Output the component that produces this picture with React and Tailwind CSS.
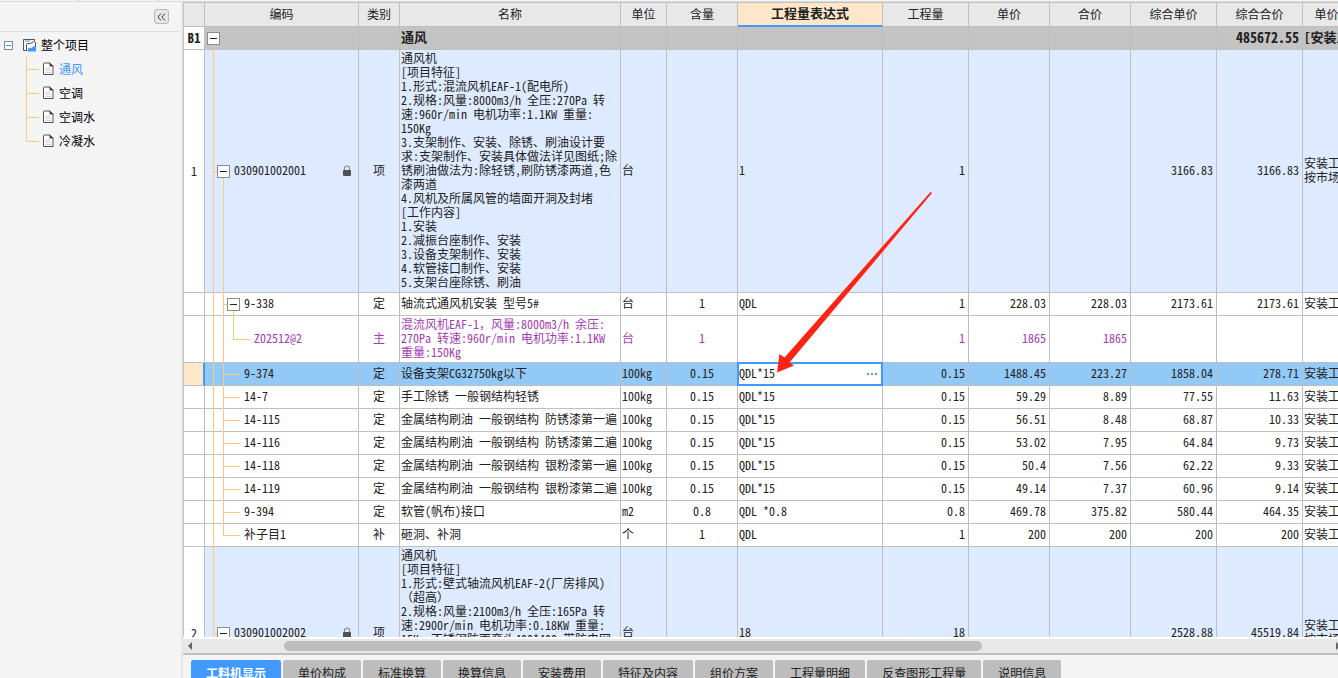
import React from 'react'
import clsx from 'clsx'

const COLUMNS = [
  { key: 'no',       label: '',           width: 21 },
  { key: 'code',     label: '编码',       width: 154 },
  { key: 'kind',     label: '类别',       width: 41 },
  { key: 'name',     label: '名称',       width: 221 },
  { key: 'unit',     label: '单位',       width: 46 },
  { key: 'content',  label: '含量',       width: 71 },
  { key: 'expr',     label: '工程量表达式', width: 145, active: true },
  { key: 'qty',      label: '工程量',     width: 86 },
  { key: 'price',    label: '单价',       width: 81 },
  { key: 'total',    label: '合价',       width: 81 },
  { key: 'unitCost', label: '综合单价',   width: 86 },
  { key: 'sumCost',  label: '综合合价',   width: 86 },
  { key: 'file',     label: '单价构成文件', width: 96 },
]

const TABLE_WIDTH = COLUMNS.reduce((sum, c) => sum + c.width, 0)

const NAME_1 = `通风机
[项目特征]
1.形式:混流风机EAF-1(配电所)
2.规格:风量:8000m3/h 全压:270Pa 转
速:960r/min 电机功率:1.1KW 重量:
150Kg
3.支架制作、安装、除锈、刷油设计要
求:支架制作、安装具体做法详见图纸;除
锈刷油做法为:除轻锈,刷防锈漆两道,色
漆两道
4.风机及所属风管的墙面开洞及封堵
[工作内容]
1.安装
2.减振台座制作、安装
3.设备支架制作、安装
4.软管接口制作、安装
5.支架台座除锈、刷油`

const NAME_2 = `通风机
[项目特征]
1.形式:壁式轴流风机EAF-2(厂房排风)
（超高）
2.规格:风量:2100m3/h 全压:165Pa 转
速:2900r/min 电机功率:0.18KW 重量:
15Kg 不锈钢防雨弯头400*400 带防虫网`

const NAME_MAIN = `混流风机EAF-1，风量:8000m3/h 余压:
270Pa 转速:960r/min 电机功率:1.1KW
重量:150Kg`

// guides: one entry per tree level, "full" | "top" | "bottom"
const ROWS = [
  { type: 'group', no: 'B1', level: 0, toggle: true, guides: ['bottom'], name: '通风', sumCost: '485672.55', file: '[安装工程]' },
  { type: 'item', no: '1', level: 1, toggle: true, lock: true, guides: ['full', 'bottom'], height: 'h-[243px]', code: '030901002001', kind: '项', name: NAME_1, unit: '台', expr: '1', qty: '1', unitCost: '3166.83', sumCost: '3166.83', file: '安装工程\n按市场价' },
  { type: 'sub', level: 2, toggle: true, guides: ['full', 'full', 'bottom'], code: '9-338', kind: '定', name: '轴流式通风机安装 型号5#', unit: '台', content: '1', expr: 'QDL', qty: '1', price: '228.03', total: '228.03', unitCost: '2173.61', sumCost: '2173.61', file: '安装工程' },
  { type: 'main', level: 3, guides: ['full', 'full', 'top'], height: 'h-[47px]', code: 'Z02512@2', kind: '主', name: NAME_MAIN, unit: '台', content: '1', qty: '1', price: '1865', total: '1865' },
  { type: 'selected', level: 2, guides: ['full', 'full'], code: '9-374', kind: '定', name: '设备支架CG32750kg以下', unit: '100kg', content: '0.15', expr: 'QDL*15', qty: '0.15', price: '1488.45', total: '223.27', unitCost: '1858.04', sumCost: '278.71', file: '安装工程' },
  { type: 'sub', level: 2, guides: ['full', 'full'], code: '14-7', kind: '定', name: '手工除锈 一般钢结构轻锈', unit: '100kg', content: '0.15', expr: 'QDL*15', qty: '0.15', price: '59.29', total: '8.89', unitCost: '77.55', sumCost: '11.63', file: '安装工程' },
  { type: 'sub', level: 2, guides: ['full', 'full'], code: '14-115', kind: '定', name: '金属结构刷油 一般钢结构 防锈漆第一遍', unit: '100kg', content: '0.15', expr: 'QDL*15', qty: '0.15', price: '56.51', total: '8.48', unitCost: '68.87', sumCost: '10.33', file: '安装工程' },
  { type: 'sub', level: 2, guides: ['full', 'full'], code: '14-116', kind: '定', name: '金属结构刷油 一般钢结构 防锈漆第二遍', unit: '100kg', content: '0.15', expr: 'QDL*15', qty: '0.15', price: '53.02', total: '7.95', unitCost: '64.84', sumCost: '9.73', file: '安装工程' },
  { type: 'sub', level: 2, guides: ['full', 'full'], code: '14-118', kind: '定', name: '金属结构刷油 一般钢结构 银粉漆第一遍', unit: '100kg', content: '0.15', expr: 'QDL*15', qty: '0.15', price: '50.4', total: '7.56', unitCost: '62.22', sumCost: '9.33', file: '安装工程' },
  { type: 'sub', level: 2, guides: ['full', 'full'], code: '14-119', kind: '定', name: '金属结构刷油 一般钢结构 银粉漆第二遍', unit: '100kg', content: '0.15', expr: 'QDL*15', qty: '0.15', price: '49.14', total: '7.37', unitCost: '60.96', sumCost: '9.14', file: '安装工程' },
  { type: 'sub', level: 2, guides: ['full', 'full'], code: '9-394', kind: '定', name: '软管(帆布)接口', unit: 'm2', content: '0.8', expr: 'QDL *0.8', qty: '0.8', price: '469.78', total: '375.82', unitCost: '580.44', sumCost: '464.35', file: '安装工程' },
  { type: 'sub', level: 2, guides: ['full', 'top'], code: '补子目1', kind: '补', name: '砸洞、补洞', unit: '个', content: '1', expr: 'QDL', qty: '1', price: '200', total: '200', unitCost: '200', sumCost: '200', file: '安装工程' },
  { type: 'item', no: '2', level: 1, toggle: true, lock: true, guides: ['full', 'bottom'], height: 'h-[173px]', code: '030901002002', kind: '项', name: NAME_2, unit: '台', expr: '18', qty: '18', unitCost: '2528.88', sumCost: '45519.84', file: '安装工程\n按市场价' },
]

const ROW_STYLE = {
  group: 'bg-[#c4c4c4] font-bold text-[13px]',
  item: 'bg-[#deeaff]',
  sub: 'bg-white',
  main: 'bg-white text-[#a33cb4]',
  selected: 'bg-[#92c9f7]',
}

const ALIGN = {
  kind: 'text-center',
  name: 'pl-px',
  unit: 'pl-px',
  content: 'text-center',
  expr: 'pl-px',
  qty: 'text-right pr-[3px]',
  price: 'text-right pr-[3px]',
  total: 'text-right pr-[3px]',
  unitCost: 'text-right pr-[3px]',
  sumCost: 'text-right pr-[3px]',
  file: 'pl-px',
}

const GUIDE = {
  full: '-top-px -bottom-px',
  top: '-top-px bottom-1/2',
  bottom: 'top-1/2 -bottom-px',
}

const TREE = ['通风', '空调', '空调水', '冷凝水']
const TABS = ['工料机显示', '单价构成', '标准换算', '换算信息', '安装费用', '特征及内容', '组价方案', '工程量明细', '反查图形工程量', '说明信息']

function LockIcon() {
  return (
    <svg width="10" height="12" viewBox="0 0 10 12" aria-hidden="true">
      <path d="M2.5 6V3.5a2.5 2.5 0 0 1 5 0V6" fill="none" stroke="#8a8a8a" strokeWidth="1.2" />
      <rect x="1" y="5" width="8" height="6" rx="1" fill="#505050" />
    </svg>
  )
}

function PageIcon() {
  return (
    <svg width="11" height="14" viewBox="0 0 11 14" aria-hidden="true">
      <path d="M1.5 1H7l3 3v8.5H.5V2a1 1 0 0 1 1-1z" fill="#fff" stroke="#555" />
      <path d="M6.5 .5L10.5 4.5H6.5z" fill="#444" />
      <path d="M2.5 6.5h5M2.5 8.5h6M2.5 10.5h6" stroke="#d4d4d4" />
    </svg>
  )
}

function ProjectIcon() {
  return (
    <svg width="14" height="14" viewBox="0 0 14 14" aria-hidden="true">
      <path d="M12 1.500H.5v11h4M3.500 12V6.500q0-1 1-1h3L11.500 3M11.500 1.500v2M12.500 4v5" fill="none" stroke="#555" />
      <rect x="2" y="2" width="5" height="2" fill="#9fd0fb" />
      <path d="M5 13.500v-3l2-1 1 1 3-2.500 2 1.500v4z" fill="#4199ff" />
    </svg>
  )
}

function Sidebar() {
  return (
    <aside className="w-[181px] shrink-0 text-xs text-black">
      <div className="mr-[2px] flex h-[30px] items-center justify-end border-b border-[#dcdcdc] pr-[10px]">
        <button
          type="button"
          aria-label="收起"
          className="flex h-[15px] w-[15px] items-center justify-center rounded-[3px] border border-[#b8b8b8] bg-[#e6e6e6]"
        >
          <svg width="9" height="8" viewBox="0 0 9 8" fill="none" stroke="#444" aria-hidden="true">
            <path d="M4 .5L1 4l3 3.500M8 .5L5 4l3 3.500" />
          </svg>
        </button>
      </div>
      <div className="flex h-6 items-center pl-1 mt-[1px]">
        <button type="button" aria-label="折叠" className="flex h-[9px] w-[9px] items-center justify-center border border-[#8a8a8a] bg-white">
          <span className="h-px w-[5px] bg-[#22a7d8]" />
        </button>
        <span className="ml-[10px] mr-1"><ProjectIcon /></span>
        整个项目
      </div>
      <ul className="ml-[26px]">
        {TREE.map((item, i) => (
          <li key={item} className="relative flex h-6 items-center">
            <span className={clsx('absolute left-0 top-0 w-px bg-[#fdc97c]', i === TREE.length - 1 ? 'h-3' : 'h-6')} />
            <span className="h-px w-[13px] bg-[#fdc97c]" />
            <span className="ml-1 mr-[5px]"><PageIcon /></span>
            <a href="#" className={i === 0 ? 'text-[#4199ff]' : 'text-black'}>{item}</a>
          </li>
        ))}
      </ul>
    </aside>
  )
}

const INDENT = ['pl-[2px]', 'pl-[12px]', 'pl-[22px]', 'pl-[32px]']
const GUIDE_X = ['left-[8px]', 'left-[18px]', 'left-[28px]']

// The grid uses half-width Latin glyphs, full-width punctuation has to opt out
function CellText({ children }) {
  if (!children) return null
  return children.split(/([，（）])/).map((part, i) => (
    i % 2 ? <span key={i} className="[font-feature-settings:normal]">{part}</span> : part
  ))
}

function CodeCell({ row }) {
  return (
    <td className="relative border-b border-r border-[#bfbfbf] p-0">
      {row.guides.map((guide, i) => (
        <span key={i} className={clsx('absolute w-px bg-[#fdc97c]', GUIDE_X[i], GUIDE[guide])} />
      ))}
      {row.level > 0 && (
        <span
          className={clsx(
            'absolute top-1/2 h-px bg-[#fdc97c]',
            GUIDE_X[row.level - 1],
            row.toggle ? 'w-[4px]' : 'w-[17px]',
          )}
        />
      )}
      <div className={clsx('relative flex items-center', INDENT[row.level])}>
        {row.toggle ? (
          <button type="button" aria-label="折叠" className="flex h-[13px] w-[13px] shrink-0 items-center justify-center border border-[#8c8c8c] bg-white">
            <span className="h-px w-[7px] bg-[#222]" />
          </button>
        ) : (
          <span className="w-[13px] shrink-0" />
        )}
        <span className="ml-[4px] flex-1 pb-[2px]">{row.code}</span>
        {row.lock && <span className="mr-[6px]"><LockIcon /></span>}
      </div>
    </td>
  )
}

function ExpressionEditor({ value }) {
  return (
    <div className="absolute -inset-px z-10 flex items-center border-2 border-[#4199ff] bg-white pr-[3px]">
      <input aria-label="工程量表达式" defaultValue={value} className="min-w-0 flex-1 bg-transparent pb-[2px] outline-none" />
      <button type="button" aria-label="更多" className="flex gap-[2px] p-px">
        <span className="h-[2px] w-[2px] bg-[#5b9bd5]" />
        <span className="h-[2px] w-[2px] bg-[#5b9bd5]" />
        <span className="h-[2px] w-[2px] bg-[#5b9bd5]" />
      </button>
    </div>
  )
}

function GridRow({ row }) {
  const selected = row.type === 'selected'
  return (
    <tr className={clsx(row.height ?? 'h-[23px]', ROW_STYLE[row.type])}>
      <td
        className={clsx(
          'border-b border-b-[#bfbfbf] p-0 pb-px text-center text-[#222]',
          selected ? 'border-r-2 border-r-[#4199ff] bg-[#fee6c8]' : 'border-r border-r-[#bfbfbf] bg-white',
        )}
      >
        {row.no}
      </td>
      <CodeCell row={row} />
      {COLUMNS.slice(2).map(col => (
        <td
          key={col.key}
          className={clsx(
            'relative whitespace-pre border-b border-r border-[#bfbfbf]',
            col.key === 'name' && row.type === 'item' ? 'pt-px align-top' : 'pb-[2px]',
            col.key === 'sumCost' && row.type === 'group' && 'text-sm leading-[14px]',
            ALIGN[col.key],
          )}
        >
          {selected && col.key === 'expr' ? <ExpressionEditor value={row.expr} /> : <CellText>{row[col.key]}</CellText>}
        </td>
      ))}
    </tr>
  )
}

function Grid() {
  return (
    <div className="relative min-h-0 flex-1 overflow-hidden border-l border-t border-[#bfbfbf] bg-white">
      <table
        className="table-fixed border-separate border-spacing-0 text-xs leading-[14px] text-[#222] [font-feature-settings:'hwid']"
        style={{ width: TABLE_WIDTH }}
      >
        <colgroup>
          {COLUMNS.map(col => <col key={col.key} style={{ width: col.width }} />)}
        </colgroup>
        <thead>
          <tr className="h-[24px]">
            {COLUMNS.map(col => (
              <th
                key={col.key}
                className={clsx(
                  'border-r border-r-[#bfbfbf] p-0 pb-[2px]',
                  col.active
                    ? 'border-b-2 border-b-[#4199ff] bg-[#fee6c8] text-[13px] font-bold'
                    : 'border-b border-b-[#bfbfbf] bg-[#e8e8e8] font-normal',
                )}
              >
                {col.label}
              </th>
            ))}
          </tr>
        </thead>
        <tbody>
          {ROWS.map((row, i) => <GridRow key={i} row={row} />)}
        </tbody>
      </table>

      {/* Arrow pointing at the edited expression */}
      <svg
        className="pointer-events-none absolute left-[592px] top-[188px] z-20"
        width="158" height="184" viewBox="0 0 158 184" aria-hidden="true"
      >
        <path d="M154.500 1L8.500 166.500L3.500 163L1 181.500L18 174.500L13.500 171.500L156 2z" fill="#ff2314" />
      </svg>
    </div>
  )
}

function Scrollbar() {
  return (
    <div className="flex h-[18px] shrink-0 items-center border-b-2 border-t-2 border-b-[#bfbfbf] border-t-white bg-[#e8e8e8] pl-[5px]">
      <svg width="4" height="8" viewBox="0 0 4 8" aria-hidden="true"><path d="M4 0v8L0 4z" fill="#666" /></svg>
      <div className="mx-[92px] flex-1">
        <div className="h-[10px] w-8/11 rounded-full bg-[#bdbdbd]" />
      </div>
      <svg width="2" height="8" viewBox="0 0 2 8" aria-hidden="true"><path d="M0 0v8l4-4z" fill="#666" /></svg>
    </div>
  )
}

function Tabs() {
  return (
    <nav className="flex h-[23px] shrink-0 items-start gap-[2px] overflow-hidden pl-2 pt-[5px]">
      {TABS.map((tab, i) => (
        <button
          key={tab}
          type="button"
          className={clsx(
            'h-[25px] shrink-0 rounded-t-[2px] px-[15px] text-xs',
            i === 0 ? 'bg-[#4199ff] font-bold text-white' : 'bg-[#bdbdbd] text-[#222]',
          )}
        >
          {tab}
        </button>
      ))}
    </nav>
  )
}

export default function App() {
  return (
    <div className="flex h-screen flex-col overflow-hidden bg-[#f4f4f4] font-['Noto_Sans_CJK_SC',sans-serif]">
      <div className="flex h-[2px] shrink-0 border-b border-[#dcdcdc]">
        <span className="w-[79px] border-r border-[#bfbfbf]" />
        <span className="w-[80px] border-r border-[#bfbfbf]" />
      </div>
      <div className="flex min-h-0 flex-1">
        <Sidebar />
        <main className="flex min-w-0 flex-1 flex-col border-l-2 border-[#e8e8e8]">
          <Grid />
          <Scrollbar />
          <Tabs />
        </main>
      </div>
    </div>
  )
}
